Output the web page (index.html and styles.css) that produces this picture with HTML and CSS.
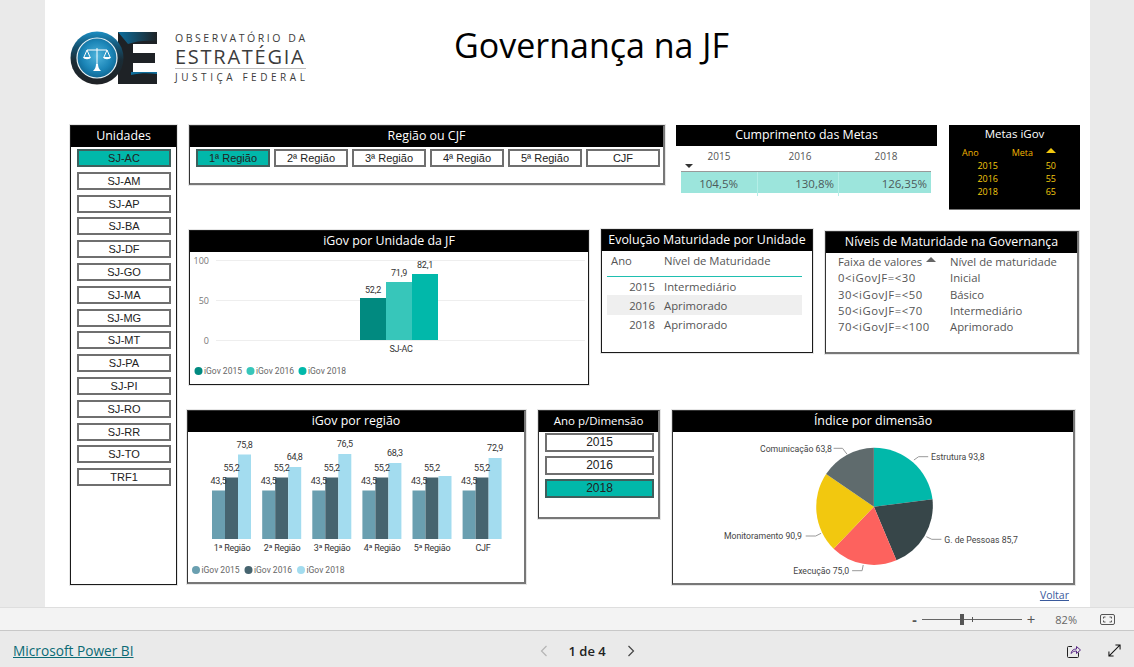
FILE: index.html
```html
<!DOCTYPE html>
<html lang="pt">
<head>
<meta charset="utf-8">
<title>Governança na JF</title>
<link rel="stylesheet" href="styles.css">
</head>
<body>
<div class="stage">
  <main class="canvas">
    <header class="top">
      <div class="logo">
        <svg class="logo-mark" width="88" height="54" viewBox="70 31 88 54">
          <defs>
            <radialGradient id="disc" cx="50%" cy="45%" r="60%">
              <stop offset="0" stop-color="#4fb4dc"/>
              <stop offset="0.6" stop-color="#1c86b8"/>
              <stop offset="1" stop-color="#0b5f8a"/>
            </radialGradient>
            <linearGradient id="ring" x1="0" y1="0" x2="0" y2="1">
              <stop offset="0" stop-color="#1b8dc2"/>
              <stop offset="0.3" stop-color="#14506e"/>
              <stop offset="0.55" stop-color="#1a2c36"/>
              <stop offset="1" stop-color="#202225"/>
            </linearGradient>
            <linearGradient id="bar" x1="0" y1="0" x2="1" y2="0">
              <stop offset="0" stop-color="#0b6e9e"/>
              <stop offset="1" stop-color="#1f2326"/>
            </linearGradient>
          </defs>
          <path d="M118 32H157V44H133V53H155V63H133V72H157V84H118Z" fill="#1e2226"/>
          <path d="M118 32H157V41C146 40 136 41 128 44Z" fill="url(#bar)"/>
          <path d="M131 75C140 73 148 73 157 74V72H131Z" fill="#0f6e9c"/>
          <circle cx="97" cy="58" r="26.5" fill="url(#ring)"/>
          <circle cx="97" cy="58" r="20" fill="url(#disc)" stroke="#e8f2f6" stroke-width="1.2"/>
          <g fill="none" stroke="#fff" stroke-width="1">
            <path d="M87 50H107M97 48V68"/>
            <path d="M87 50L84 57M87 50L90 57M107 50L104 57M107 50L110 57"/>
          </g>
          <path d="M83 57H91C90.500 60 83.500 60 83 57ZM103 57H111C110.500 60 103.500 60 103 57ZM93 71C95 69 96 67 96 64H98C98 67 99 69 101 71Z" fill="#fff"/>
        </svg>
        <div class="logo-text">
          <span class="logo-l1">OBSERVATÓRIO DA</span>
          <span class="logo-l2">ESTRATÉGIA</span>
          <span class="logo-l3">JUSTIÇA FEDERAL</span>
        </div>
      </div>
      <h1 class="title">Governança na JF</h1>
    </header>

    <div class="board">
      <aside class="panel units">
        <div class="head">Unidades</div>
        <div class="unit-list">
          <div class="btn on">SJ-AC</div>
          <div class="btn">SJ-AM</div>
          <div class="btn">SJ-AP</div>
          <div class="btn">SJ-BA</div>
          <div class="btn">SJ-DF</div>
          <div class="btn">SJ-GO</div>
          <div class="btn">SJ-MA</div>
          <div class="btn">SJ-MG</div>
          <div class="btn">SJ-MT</div>
          <div class="btn">SJ-PA</div>
          <div class="btn">SJ-PI</div>
          <div class="btn">SJ-RO</div>
          <div class="btn">SJ-RR</div>
          <div class="btn">SJ-TO</div>
          <div class="btn">TRF1</div>
        </div>
      </aside>

      <div class="content">
        <section class="row row-1">
          <div class="panel soft region">
            <div class="head">Região ou CJF</div>
            <div class="region-list">
              <div class="btn on">1ª Região</div>
              <div class="btn">2ª Região</div>
              <div class="btn">3ª Região</div>
              <div class="btn">4ª Região</div>
              <div class="btn">5ª Região</div>
              <div class="btn">CJF</div>
            </div>
          </div>

          <div class="metas-panel">
            <div class="head">Cumprimento das Metas</div>
            <div class="metas-cols">
              <span>2015</span><span>2016</span><span>2018</span>
              <i class="caret-down"></i>
            </div>
            <div class="metas-vals">
              <span>104,5%</span><span>130,8%</span><span>126,35%</span>
            </div>
          </div>

          <div class="goal-panel">
            <div class="goal-title">Metas iGov</div>
            <div class="goal-grid">
              <span class="goal-y">Ano</span><span class="goal-m">Meta</span><i class="caret-up gold"></i>
              <span class="goal-yv">2015</span><span></span><span class="goal-v">50</span>
              <span class="goal-yv">2016</span><span></span><span class="goal-v">55</span>
              <span class="goal-yv">2018</span><span></span><span class="goal-v">65</span>
            </div>
          </div>
        </section>

        <section class="row row-2">
          <div class="panel unit-chart">
            <div class="head">iGov por Unidade da JF</div>
            <svg class="chart" width="398" height="132" viewBox="190 252 398 132">
              <g class="grid">
                <path d="M216 260.500H585M216 300.500H585M216 340.500H585"/>
              </g>
              <text class="axis" x="209" y="264" text-anchor="end">100</text>
              <text class="axis" x="209" y="304" text-anchor="end">50</text>
              <text class="axis" x="209" y="344" text-anchor="end">0</text>
              <rect x="360" y="298" width="26" height="42" fill="#018a80"/>
              <rect x="386" y="282" width="26" height="58" fill="#37c6ba"/>
              <rect x="412" y="274" width="26" height="66" fill="#01b8aa"/>
              <text class="lab" x="373" y="293" text-anchor="middle">52,2</text>
              <text class="lab" x="399" y="276" text-anchor="middle">71,9</text>
              <text class="lab" x="425" y="268" text-anchor="middle">82,1</text>
              <text class="lab" x="401" y="352" text-anchor="middle">SJ-AC</text>
              <circle cx="198.500" cy="371" r="4" fill="#018a80"/>
              <text class="leg" x="204" y="374">iGov 2015</text>
              <circle cx="250.500" cy="371" r="4" fill="#37c6ba"/>
              <text class="leg" x="256" y="374">iGov 2016</text>
              <circle cx="302.500" cy="371" r="4" fill="#01b8aa"/>
              <text class="leg" x="308" y="374">iGov 2018</text>
            </svg>
          </div>

          <div class="panel evol">
            <div class="head">Evolução Maturidade por Unidade</div>
            <div class="evol-cols"><span>Ano</span><span>Nível de Maturidade</span></div>
            <div class="evol-row"><span class="yr">2015</span><span>Intermediário</span></div>
            <div class="evol-row hl"><span class="yr">2016</span><span>Aprimorado</span></div>
            <div class="evol-row"><span class="yr">2018</span><span>Aprimorado</span></div>
          </div>

          <div class="panel soft levels">
            <div class="head">Níveis de Maturidade na Governança</div>
            <div class="levels-grid">
              <span class="lv-h">Faixa de valores<i class="caret-up"></i></span><span>Nível de maturidade</span>
              <span class="rng">0&lt;iGovJF=&lt;30</span><span>Inicial</span>
              <span class="rng">30&lt;iGovJF=&lt;50</span><span>Básico</span>
              <span class="rng">50&lt;iGovJF=&lt;70</span><span>Intermediário</span>
              <span class="rng">70&lt;iGovJF=&lt;100</span><span>Aprimorado</span>
            </div>
          </div>
        </section>

        <section class="row row-3">
          <div class="panel soft region-chart">
            <div class="head">iGov por região</div>
            <svg class="chart" width="337" height="151" viewBox="188 432 337 151">
              <g fill="#6a9fb0">
                <rect x="212" y="490.500" width="13" height="48.500"/>
                <rect x="262.200" y="490.500" width="13" height="48.500"/>
                <rect x="312.300" y="490.500" width="13" height="48.500"/>
                <rect x="362.400" y="490.500" width="13" height="48.500"/>
                <rect x="412.500" y="490.500" width="13" height="48.500"/>
                <rect x="462.600" y="490.500" width="13" height="48.500"/>
              </g>
              <g fill="#46646f">
                <rect x="225" y="477.500" width="13" height="61.500"/>
                <rect x="275.200" y="477.500" width="13" height="61.500"/>
                <rect x="325.300" y="477.500" width="13" height="61.500"/>
                <rect x="375.400" y="477.500" width="13" height="61.500"/>
                <rect x="425.500" y="477.500" width="13" height="61.500"/>
                <rect x="475.600" y="477.500" width="13" height="61.500"/>
              </g>
              <g fill="#a3dcef">
                <rect x="238" y="454.500" width="13" height="84.500"/>
                <rect x="288.200" y="467" width="13" height="72"/>
                <rect x="338.300" y="454" width="13" height="85"/>
                <rect x="388.400" y="463" width="13" height="76"/>
                <rect x="438.500" y="476" width="13" height="63"/>
                <rect x="488.600" y="458" width="13" height="81"/>
              </g>
              <g class="lab" text-anchor="middle">
                <text x="218.500" y="484">43,5</text><text x="268.700" y="484">43,5</text><text x="318.800" y="484">43,5</text>
                <text x="368.900" y="484">43,5</text><text x="419" y="484">43,5</text><text x="469.100" y="484">43,5</text>
                <text x="231.500" y="471">55,2</text><text x="281.700" y="471">55,2</text><text x="331.800" y="471">55,2</text>
                <text x="381.900" y="471">55,2</text><text x="432" y="471">55,2</text><text x="482.100" y="471">55,2</text>
                <text x="244.500" y="448">75,8</text><text x="294.700" y="460">64,8</text><text x="344.800" y="447">76,5</text>
                <text x="394.900" y="456">68,3</text><text x="495.100" y="451">72,9</text>
                <text x="232" y="551">1ª Região</text><text x="282" y="551">2ª Região</text><text x="332" y="551">3ª Região</text>
                <text x="382" y="551">4ª Região</text><text x="432" y="551">5ª Região</text><text x="483" y="551">CJF</text>
              </g>
              <circle cx="196" cy="570" r="4" fill="#6a9fb0"/>
              <text class="leg" x="201.500" y="573">iGov 2015</text>
              <circle cx="248.500" cy="570" r="4" fill="#46646f"/>
              <text class="leg" x="254" y="573">iGov 2016</text>
              <circle cx="301" cy="570" r="4" fill="#a3dcef"/>
              <text class="leg" x="306.500" y="573">iGov 2018</text>
            </svg>
          </div>

          <div class="panel soft year">
            <div class="head year-head">Ano p/Dimensão</div>
            <div class="year-list">
              <div class="btn big">2015</div>
              <div class="btn big">2016</div>
              <div class="btn big on">2018</div>
            </div>
          </div>

          <div class="side-stack">
            <div class="panel soft pie-panel">
              <div class="head">Índice por dimensão</div>
              <svg class="chart" width="401" height="152" viewBox="673 432 401 152">
                <path d="M873.900 506.700V447.700A58.600 59 0 0 1 932.500 499.300Z" fill="#01b8aa"/>
                <path d="M873.900 506.700L932.500 499.300A58.600 59 0 0 1 896.400 560.300Z" fill="#374649"/>
                <path d="M873.900 506.700L896.400 560.300A58.600 59 0 0 1 833.600 548.700Z" fill="#fd625e"/>
                <path d="M873.900 506.700L833.600 548.700A58.600 59 0 0 1 826.100 474Z" fill="#f2c80f"/>
                <path d="M873.900 506.700L826.100 474A58.600 59 0 0 1 873.900 447.700Z" fill="#5f6b6d"/>
                <g class="leader">
                  <path d="M913.900 460L918.600 456.700H928.200"/>
                  <path d="M926.400 536.700L931.800 539.300H941.400"/>
                  <path d="M852.100 570.700H862.100L863.200 565"/>
                  <path d="M805.700 536H815.700L821.100 533.300"/>
                  <path d="M833.600 448.300H842.500L847.100 454.300"/>
                </g>
                <g class="pie-lab">
                  <text x="931" y="460">Estrutura 93,8</text>
                  <text x="944.300" y="542.500">G. de Pessoas 85,7</text>
                  <text x="793.200" y="574">Execução 75,0</text>
                  <text x="723.900" y="538.500">Monitoramento 90,9</text>
                  <text x="760" y="451.500">Comunicação 63,8</text>
                </g>
              </svg>
            </div>
            <a class="back" href="#">Voltar</a>
          </div>
        </section>
      </div>
    </div>
  </main>
</div>

<div class="zoombar">
  <span class="zoom-sign">-</span>
  <div class="slider"><i class="thumb"></i><i class="tick"></i></div>
  <span class="zoom-plus">+</span>
  <span class="zoom-pct">82%</span>
  <svg class="fit" width="15" height="11" viewBox="0 0 15 11">
    <rect x="0.500" y="0.500" width="14" height="10" rx="1.500" fill="none" stroke="#555"/>
    <path d="M3.500 4.500V3H5.500M9.500 3H11.500V4.500M11.500 6.500V8H9.500M5.500 8H3.500V6.500" fill="none" stroke="#555"/>
  </svg>
</div>

<footer class="footer">
  <a class="brand" href="#">Microsoft Power BI</a>
  <nav class="pager">
    <svg width="8" height="12" viewBox="0 0 8 12"><path d="M6.500 1L1.500 6L6.500 11" fill="none" stroke="#b5b5b5" stroke-width="1.200"/></svg>
    <span class="pages">1 de 4</span>
    <svg width="8" height="12" viewBox="0 0 8 12"><path d="M1.500 1L6.500 6L1.500 11" fill="none" stroke="#444" stroke-width="1.200"/></svg>
  </nav>
  <div class="foot-icons">
    <svg width="14" height="14" viewBox="0 0 14 14">
      <path d="M5 2.500H1.500A1 1 0 0 0 .5 3.500V12.500A1 1 0 0 0 1.500 13.500H10.500A1 1 0 0 0 11.500 12.500V8.500" fill="none" stroke="#222"/>
      <path d="M4 9.500C4.500 6.500 6.500 5 9.500 5V2.500L13.500 6L9.500 9.500V7C7.500 7 5.500 7.700 4 9.500Z" fill="none" stroke="#5b2a86"/>
    </svg>
    <svg width="13" height="13" viewBox="0 0 14 14">
      <path d="M1 13L13 1M8 1H13V6M1 8V13H6" fill="none" stroke="#111" stroke-width="1.100"/>
    </svg>
  </div>
</footer>
</body>
</html>
```

FILE: styles.css
```css
* { box-sizing: border-box; }
html, body { margin: 0; height: 100%; }
body {
  width: 1134px;
  height: 667px;
  overflow: hidden;
  display: flex;
  flex-direction: column;
  background: #eaeaea;
  font-family: "Open Sans", "Noto Sans", sans-serif;
  color: #222;
}
.stage { height: 607px; padding-left: 45px; overflow: hidden; }
.canvas { width: 1045px; height: 607px; background: #fff; padding-left: 25px; }

/* header */
.top { height: 125px; display: flex; align-items: flex-start; }
.logo { display: flex; width: 236px; padding-top: 31px; }
.logo-mark { margin-left: 0; flex: none; }
.logo-text { display: flex; flex-direction: column; margin-left: 17px; color: #3c3c3c; }
.logo-l1 { font-size: 10.500px; letter-spacing: 2.550px; line-height: 14px; white-space: nowrap; }
.logo-l2 { font-size: 20px; letter-spacing: 1.750px; line-height: 23px; white-space: nowrap; border-bottom: 1px solid #bdbdbd; width: 131px; }
.logo-l3 { font-size: 10px; letter-spacing: 3.550px; line-height: 16px; white-space: nowrap; }
.title { margin: 22px 0 0 148px; font-size: 34px; line-height: 46px; font-weight: 400; color: #000; white-space: nowrap; }

/* board */
.board { display: flex; gap: 10px; align-items: flex-start; }
.content { display: flex; flex-direction: column; }
.row { display: flex; gap: 12px; align-items: flex-start; }
.row-1 { height: 104px; padding-left: 2px; }
.row-2 { height: 181px; padding-left: 2px; }

.panel { border: 1px solid #1a1a1a; background: #fff; box-shadow: 0 0 0 1px #e6e6e6; }
.panel.soft { border-color: #333; border-right: 2px solid #777; border-bottom: 2px solid #777; }
.head {
  height: 21px;
  background: #000;
  color: #fff;
  font-size: 12.400px;
  line-height: 20px;
  text-align: center;
  white-space: nowrap;
}
.chart { display: block; }

/* buttons */
.btn {
  height: 18px;
  border: 2px solid #6f6f6f;
  background: #fff;
  color: #222;
  font-family: "Liberation Sans", Arial, sans-serif;
  font-size: 11px;
  line-height: 14px;
  text-align: center;
}
.btn.on { background: #01b8aa; border-color: #3f5f5c; }
.btn.big { height: 19px; font-size: 12px; line-height: 15px; }

.units { width: 107px; height: 460px; }
.unit-list { display: flex; flex-direction: column; gap: 4.800px; padding: 2px 5px 0 6px; }

.region { width: 476px; height: 60px; }
.region-list { display: flex; gap: 4px; padding: 2px 3px 0 6px; }
.region-list .btn { flex: 1; }

.metas-panel { width: 261px; margin-left: -1px; }
.metas-panel .head { height: 21px; }
.metas-cols {
  position: relative;
  margin: 0 6px 0 5px;
  height: 26px;
  border-bottom: 1px solid #999;
  display: grid;
  grid-template-columns: 76px 86px 86px;
  font-size: 10px;
  line-height: 20px;
  color: #555;
}
.metas-cols span { text-align: center; }
.caret-down {
  position: absolute;
  left: 4px;
  bottom: 3px;
  border-left: 4px solid transparent;
  border-right: 4px solid transparent;
  border-top: 4px solid #333;
}
.metas-vals {
  margin: 0 6px 0 5px;
  height: 21px;
  background: #9ce5dc;
  display: grid;
  grid-template-columns: 77px 81px 92px;
  font-size: 11.500px;
  line-height: 24px;
  color: #4c5a5a;
}
.metas-vals span { text-align: right; padding-right: 4px; border-right: 1px solid #b5eee7; }
.metas-vals span:nth-child(1) { padding-right: 19px; }
.metas-vals span:nth-child(3) { border-right: 0; }

.goal-panel { width: 131px; height: 85px; background: #000; color: #f2c80f; border-bottom: 1px solid #777; }
.goal-title { color: #fff; font-size: 11.500px; line-height: 18px; text-align: center; }
.goal-grid {
  display: grid;
  grid-template-columns: 36px 35px 23px;
  margin: 3px 0 0 13px;
  font-size: 9px;
  line-height: 13px;
}
.goal-yv { text-align: right; }
.goal-m { text-align: right; }
.goal-v { text-align: right; }
.goal-y, .goal-m { color: #f0b400; }
.caret-up {
  display: inline-block;
  border-left: 5px solid transparent;
  border-right: 5px solid transparent;
  border-bottom: 5px solid #666;
  width: 0;
  height: 0;
}
.caret-up.gold { border-bottom-color: #f2c80f; justify-self: end; margin: 2px 0 0 0; }

/* charts */
.unit-chart { width: 400px; height: 155px; margin-top: 1px; }
.grid path { fill: none; stroke: #eee; }
.axis { font-size: 9px; fill: #777; }
.lab, .lab text { font-size: 9px; letter-spacing: -0.250px; fill: #333; font-family: "Roboto", "Open Sans", sans-serif; }
.leg { font-size: 8.500px; fill: #666; font-family: "Roboto", "Open Sans", sans-serif; }
.leader path { fill: none; stroke: #999; }
.pie-lab text { font-size: 8.700px; fill: #444; font-family: "Roboto", "Open Sans", sans-serif; }

/* maturity */
.evol { width: 212px; height: 124px; font-size: 11.300px; color: #555; }
.evol-cols {
  display: grid;
  grid-template-columns: 53px 1fr;
  margin: 0 10px 0 5px;
  padding: 1px 0 7px 4px;
  height: 26px;
  line-height: 18px;
  border-bottom: 1px solid #1fbfb0;
}
.evol-row {
  display: grid;
  grid-template-columns: 48px 1fr;
  column-gap: 9px;
  margin: 0 10px 0 5px;
  height: 18px;
  line-height: 19px;
}
.evol-row.hl { background: #efefef; height: 20px; line-height: 21px; }
.yr { text-align: right; }

.levels { width: 254px; height: 123px; margin-top: 2px; font-size: 11.300px; color: #555; }
.levels-grid {
  display: grid;
  grid-template-columns: 112px 1fr;
  padding: 1px 0 0 12px;
  line-height: 16.300px;
}
.rng { letter-spacing: 0.550px; }
.lv-h { position: relative; }
.lv-h .caret-up { position: absolute; left: 88px; top: 3px; }

.region-chart { width: 339px; height: 174px; }
.year { width: 122px; height: 109px; }
.year-head { font-size: 11.500px; }
.year-list { display: flex; flex-direction: column; gap: 4px; padding: 1px 4px 0 6px; }
.side-stack { display: flex; flex-direction: column; }
.pie-panel { width: 403px; height: 175px; }
.back {
  align-self: flex-end;
  margin: 3px 6px 0 0;
  font-size: 10.500px;
  line-height: 15px;
  color: #3a5a9c;
}

/* zoom bar */
.zoombar {
  height: 24px;
  background: #f3f3f3;
  border-top: 1px solid #dedede;
  border-bottom: 1px solid #c8c8c8;
  display: flex;
  align-items: center;
  justify-content: flex-end;
  padding-right: 19px;
  color: #555;
}
.zoom-sign { font-size: 14px; font-weight: 700; margin-right: 5px; }
.slider { position: relative; width: 100px; height: 1px; background: #666; }
.thumb { position: absolute; left: 38px; top: -5px; width: 4px; height: 11px; background: #555; }
.tick { position: absolute; left: 50px; top: -2px; width: 1px; height: 5px; background: #555; }
.zoom-plus { font-size: 15px; margin-left: 5px; }
.zoom-pct { font-size: 11px; margin-left: 20px; color: #666; }
.fit { margin-left: 23px; }

/* footer */
.footer {
  height: 36px;
  display: flex;
  align-items: center;
  background: #eaeaea;
  padding: 3px 13px 0;
}
.brand { font-size: 13.700px; color: #0b6a75; white-space: nowrap; }
.pager { display: flex; align-items: center; margin-left: 406px; gap: 21px; }
.pages { font-size: 13px; font-weight: 600; color: #222; white-space: nowrap; }
.foot-icons { margin-left: auto; display: flex; gap: 27px; align-items: center; }
```
